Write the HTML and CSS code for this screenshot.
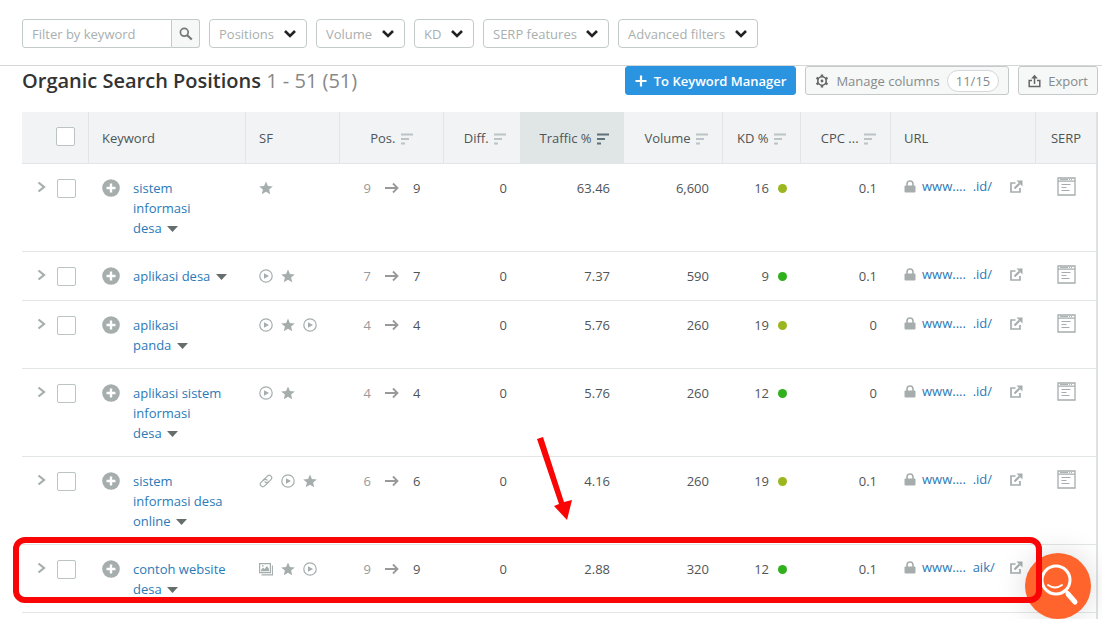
FILE: index.html
```html
<!DOCTYPE html>
<html lang="en">
<head>
  <meta charset="UTF-8">
  <meta name="viewport" content="width=device-width, initial-scale=1.0">
  <title>Organic Search Positions</title>
  <link rel="stylesheet" href="styles.css">
</head>
<body>
  <!-- icon sprite -->
  <svg class="sprite" aria-hidden="true">
    <symbol id="i-chevron" viewBox="0 0 14 10"><path d="M2 2l5 5 5-5" fill="none" stroke="currentColor" stroke-width="2.6"/></symbol>
    <symbol id="i-search" viewBox="0 0 14 14"><circle cx="5.3" cy="5.3" r="3.9" fill="none" stroke="currentColor" stroke-width="1.7"/><path d="M8.2 8.2l4.6 4.3" stroke="currentColor" stroke-width="2.2"/></symbol>
    <symbol id="i-plus" viewBox="0 0 12 12"><path d="M6 .5v11M.5 6h11" stroke="currentColor" stroke-width="2.2"/></symbol>
    <symbol id="i-gear" viewBox="0 0 14 14"><circle cx="7" cy="7" r="4.2" fill="none" stroke="currentColor" stroke-width="1.6"/><path d="M7 .6v2.400M7 11v2.400M1.500 3.800l2 1.200M10.500 9l2 1.200M1.500 10.200l2-1.200M10.500 5l2-1.200" stroke="currentColor" stroke-width="2.400"/><circle cx="7" cy="7" r="1.400" fill="currentColor"/></symbol>
    <symbol id="i-export" viewBox="0 0 13 14"><path d="M4 6.500H1.200v6h10.600v-6H9M6.500 10V2" fill="none" stroke="currentColor" stroke-width="1.500"/><path d="M3.200 4.600L6.500.8l3.300 3.800z" fill="currentColor"/></symbol>
    <symbol id="i-sort" viewBox="0 0 12 12"><path d="M0 1.500h12M0 6h8M0 10.500h4" stroke="currentColor" stroke-width="2"/></symbol>
    <symbol id="i-expand" viewBox="0 0 9 12"><path d="M1.500 1.500L7 6l-5.500 4.500" fill="none" stroke="currentColor" stroke-width="2.200"/></symbol>
    <symbol id="i-add" viewBox="0 0 18 18"><circle cx="9" cy="9" r="8.800" fill="currentColor"/><path d="M9 4.500v9M4.500 9h9" stroke="#fff" stroke-width="2.400"/></symbol>
    <symbol id="i-caret" viewBox="0 0 11 6"><path d="M0 0h11L5.500 6z" fill="currentColor"/></symbol>
    <symbol id="i-star" viewBox="0 0 14 14"><path d="M7 .5l1.900 4.500 4.900.4-3.700 3.200 1.100 4.700L7 10.800l-4.200 2.500 1.100-4.700L.2 5.400l4.900-.4z" fill="currentColor"/></symbol>
    <symbol id="i-play" viewBox="0 0 14 14"><circle cx="7" cy="7" r="6.200" fill="none" stroke="currentColor" stroke-width="1.200"/><path d="M5 4.200L10 7l-5 2.800z" fill="currentColor"/></symbol>
    <symbol id="i-link" viewBox="0 0 14 14"><g fill="none" stroke="currentColor" stroke-width="1.200" transform="rotate(-45 7 7)"><path d="M8.500 9.500H2.500a2.500 2.500 0 0 1 0-5h3.500a2.500 2.500 0 0 1 2.200 3.200"/><path d="M5.500 4.500h6a2.500 2.500 0 0 1 0 5H8a2.500 2.500 0 0 1-2.200-3.200"/></g></symbol>
    <symbol id="i-image" viewBox="0 0 14 14"><path d="M.6 1.600h10.800v9H.6zM2.500 12.800h11V3.500" fill="none" stroke="currentColor" stroke-width="1.200"/><path d="M2 9.300V8l2-2.500 1.500 1.500 2.500-3L10 7v2.300z" fill="currentColor"/><circle cx="3.800" cy="3.900" r=".8" fill="currentColor"/></symbol>
    <symbol id="i-arrow" viewBox="0 0 14 12"><path d="M0 6h12M8 1.500L12.500 6 8 10.500" fill="none" stroke="currentColor" stroke-width="1.800"/></symbol>
    <symbol id="i-lock" viewBox="0 0 12 13"><path d="M3 6V4a3 3 0 0 1 6 0v2" fill="none" stroke="currentColor" stroke-width="1.600"/><rect x=".5" y="5.500" width="11" height="7" rx="1" fill="currentColor"/></symbol>
    <symbol id="i-external" viewBox="0 0 13 13"><path d="M5.500 3H1v9h9V8" fill="none" stroke="currentColor" stroke-width="1.700"/><path d="M4.500 8.500l5-5" stroke="currentColor" stroke-width="2.200"/><path d="M6.500.5h6v6z" fill="currentColor"/></symbol>
    <symbol id="i-serp" viewBox="0 0 19 19"><path d="M1 1h17v17H1zM1 4.200h17" fill="none" stroke="currentColor" stroke-width="1.300"/><path d="M3 2.600h8M12 2.600h1M14 2.600h1" stroke="currentColor"/><path d="M4.500 7.500h9M4.500 10.500h5M4.500 13.500h8" stroke="currentColor" stroke-width="1.200"/></symbol>
  </svg>

  <form class="filters">
    <div class="search">
      <input type="text" placeholder="Filter by keyword" aria-label="Filter by keyword">
      <button type="button" aria-label="Search"><svg width="14" height="14"><use href="#i-search"/></svg></button>
    </div>
    <div class="filter">
      <select aria-label="Positions"><option>Positions</option></select>
      <svg width="14" height="10"><use href="#i-chevron"/></svg>
    </div>
    <div class="filter">
      <select aria-label="Volume"><option>Volume</option></select>
      <svg width="14" height="10"><use href="#i-chevron"/></svg>
    </div>
    <div class="filter">
      <select aria-label="KD"><option>KD</option></select>
      <svg width="14" height="10"><use href="#i-chevron"/></svg>
    </div>
    <div class="filter">
      <select aria-label="SERP features"><option>SERP features</option></select>
      <svg width="14" height="10"><use href="#i-chevron"/></svg>
    </div>
    <div class="filter">
      <select aria-label="Advanced filters"><option>Advanced filters</option></select>
      <svg width="14" height="10"><use href="#i-chevron"/></svg>
    </div>
  </form>

  <header class="heading">
    <h1>Organic Search Positions <span>1 - 51 (51)</span></h1>
    <div class="actions">
      <button class="btn primary" type="button"><svg width="12" height="12"><use href="#i-plus"/></svg>To Keyword Manager</button>
      <button class="btn" type="button"><svg width="14" height="14"><use href="#i-gear"/></svg>Manage columns <span class="count">11/15</span></button>
      <button class="btn" type="button"><svg width="13" height="14"><use href="#i-export"/></svg>Export</button>
    </div>
  </header>

  <main class="table-wrap">
    <table>
      <colgroup>
        <col class="c-check"><col class="c-keyword"><col class="c-sf"><col class="c-pos"><col class="c-diff"><col class="c-traffic"><col class="c-volume"><col class="c-kd"><col class="c-cpc"><col class="c-url"><col class="c-serp">
      </colgroup>
      <thead>
        <tr>
          <th class="check"><input type="checkbox" aria-label="Select all"></th>
          <th>Keyword</th>
          <th>SF</th>
          <th class="pos">Pos. <svg class="sort" width="12" height="12"><use href="#i-sort"/></svg></th>
          <th class="num">Diff. <svg class="sort" width="12" height="12"><use href="#i-sort"/></svg></th>
          <th class="num sorted">Traffic % <svg class="sort" width="12" height="12"><use href="#i-sort"/></svg></th>
          <th class="num">Volume <svg class="sort" width="12" height="12"><use href="#i-sort"/></svg></th>
          <th class="num">KD % <svg class="sort" width="12" height="12"><use href="#i-sort"/></svg></th>
          <th class="num">CPC ... <svg class="sort" width="12" height="12"><use href="#i-sort"/></svg></th>
          <th>URL</th>
          <th class="serp">SERP</th>
        </tr>
      </thead>
      <tbody>
        <tr>
          <td><div class="select"><svg width="9" height="12"><use href="#i-expand"/></svg><input type="checkbox" aria-label="Select sistem informasi desa"></div></td>
          <td><div class="keyword"><svg width="18" height="18"><use href="#i-add"/></svg><a href="#">sistem informasi <span>desa <svg width="11" height="6"><use href="#i-caret"/></svg></span></a></div></td>
          <td><div class="features"><svg><use href="#i-star"/></svg></div></td>
          <td><div class="move"><span>9</span><svg width="14" height="12"><use href="#i-arrow"/></svg>9</div></td>
          <td class="num">0</td>
          <td class="num">63.46</td>
          <td class="num">6,600</td>
          <td class="num"><div class="kd">16<i class="dot olive"></i></div></td>
          <td class="num">0.1</td>
          <td><div class="url"><svg width="12" height="13"><use href="#i-lock"/></svg><a href="#">www.... &nbsp;.id/</a><svg class="ext" width="13" height="13"><use href="#i-external"/></svg></div></td>
          <td class="serp"><svg width="19" height="19"><use href="#i-serp"/></svg></td>
        </tr>
        <tr>
          <td><div class="select"><svg width="9" height="12"><use href="#i-expand"/></svg><input type="checkbox" aria-label="Select aplikasi desa"></div></td>
          <td><div class="keyword"><svg width="18" height="18"><use href="#i-add"/></svg><a href="#">aplikasi <span>desa <svg width="11" height="6"><use href="#i-caret"/></svg></span></a></div></td>
          <td><div class="features"><svg><use href="#i-play"/></svg><svg><use href="#i-star"/></svg></div></td>
          <td><div class="move"><span>7</span><svg width="14" height="12"><use href="#i-arrow"/></svg>7</div></td>
          <td class="num">0</td>
          <td class="num">7.37</td>
          <td class="num">590</td>
          <td class="num"><div class="kd">9<i class="dot"></i></div></td>
          <td class="num">0.1</td>
          <td><div class="url"><svg width="12" height="13"><use href="#i-lock"/></svg><a href="#">www.... &nbsp;.id/</a><svg class="ext" width="13" height="13"><use href="#i-external"/></svg></div></td>
          <td class="serp"><svg width="19" height="19"><use href="#i-serp"/></svg></td>
        </tr>
        <tr>
          <td><div class="select"><svg width="9" height="12"><use href="#i-expand"/></svg><input type="checkbox" aria-label="Select aplikasi panda"></div></td>
          <td><div class="keyword"><svg width="18" height="18"><use href="#i-add"/></svg><a href="#">aplikasi <span>panda <svg width="11" height="6"><use href="#i-caret"/></svg></span></a></div></td>
          <td><div class="features"><svg><use href="#i-play"/></svg><svg><use href="#i-star"/></svg><svg><use href="#i-play"/></svg></div></td>
          <td><div class="move"><span>4</span><svg width="14" height="12"><use href="#i-arrow"/></svg>4</div></td>
          <td class="num">0</td>
          <td class="num">5.76</td>
          <td class="num">260</td>
          <td class="num"><div class="kd">19<i class="dot olive"></i></div></td>
          <td class="num">0</td>
          <td><div class="url"><svg width="12" height="13"><use href="#i-lock"/></svg><a href="#">www.... &nbsp;.id/</a><svg class="ext" width="13" height="13"><use href="#i-external"/></svg></div></td>
          <td class="serp"><svg width="19" height="19"><use href="#i-serp"/></svg></td>
        </tr>
        <tr>
          <td><div class="select"><svg width="9" height="12"><use href="#i-expand"/></svg><input type="checkbox" aria-label="Select aplikasi sistem informasi desa"></div></td>
          <td><div class="keyword"><svg width="18" height="18"><use href="#i-add"/></svg><a href="#">aplikasi sistem informasi <span>desa <svg width="11" height="6"><use href="#i-caret"/></svg></span></a></div></td>
          <td><div class="features"><svg><use href="#i-play"/></svg><svg><use href="#i-star"/></svg></div></td>
          <td><div class="move"><span>4</span><svg width="14" height="12"><use href="#i-arrow"/></svg>4</div></td>
          <td class="num">0</td>
          <td class="num">5.76</td>
          <td class="num">260</td>
          <td class="num"><div class="kd">12<i class="dot"></i></div></td>
          <td class="num">0</td>
          <td><div class="url"><svg width="12" height="13"><use href="#i-lock"/></svg><a href="#">www.... &nbsp;.id/</a><svg class="ext" width="13" height="13"><use href="#i-external"/></svg></div></td>
          <td class="serp"><svg width="19" height="19"><use href="#i-serp"/></svg></td>
        </tr>
        <tr>
          <td><div class="select"><svg width="9" height="12"><use href="#i-expand"/></svg><input type="checkbox" aria-label="Select sistem informasi desa online"></div></td>
          <td><div class="keyword"><svg width="18" height="18"><use href="#i-add"/></svg><a href="#">sistem informasi desa <span>online <svg width="11" height="6"><use href="#i-caret"/></svg></span></a></div></td>
          <td><div class="features"><svg><use href="#i-link"/></svg><svg><use href="#i-play"/></svg><svg><use href="#i-star"/></svg></div></td>
          <td><div class="move"><span>6</span><svg width="14" height="12"><use href="#i-arrow"/></svg>6</div></td>
          <td class="num">0</td>
          <td class="num">4.16</td>
          <td class="num">260</td>
          <td class="num"><div class="kd">19<i class="dot olive"></i></div></td>
          <td class="num">0.1</td>
          <td><div class="url"><svg width="12" height="13"><use href="#i-lock"/></svg><a href="#">www.... &nbsp;.id/</a><svg class="ext" width="13" height="13"><use href="#i-external"/></svg></div></td>
          <td class="serp"><svg width="19" height="19"><use href="#i-serp"/></svg></td>
        </tr>
        <tr>
          <td><div class="select"><svg width="9" height="12"><use href="#i-expand"/></svg><input type="checkbox" aria-label="Select contoh website desa"></div></td>
          <td><div class="keyword"><svg width="18" height="18"><use href="#i-add"/></svg><a href="#">contoh website <span>desa <svg width="11" height="6"><use href="#i-caret"/></svg></span></a></div></td>
          <td><div class="features"><svg><use href="#i-image"/></svg><svg><use href="#i-star"/></svg><svg><use href="#i-play"/></svg></div></td>
          <td><div class="move"><span>9</span><svg width="14" height="12"><use href="#i-arrow"/></svg>9</div></td>
          <td class="num">0</td>
          <td class="num">2.88</td>
          <td class="num">320</td>
          <td class="num"><div class="kd">12<i class="dot"></i></div></td>
          <td class="num">0.1</td>
          <td><div class="url"><svg width="12" height="13"><use href="#i-lock"/></svg><a href="#">www.... &nbsp;aik/</a><svg class="ext" width="13" height="13"><use href="#i-external"/></svg></div></td>
          <td></td>
        </tr>
      </tbody>
    </table>

    <!-- callout on the last row -->
    <div class="callout"></div>
    <svg class="pointer" width="36" height="86" viewBox="0 0 36 86"><path d="M0 3L6 1l21 65 8-2-5 20-13-14 5-2z" fill="#fa0505"/></svg>
  </main>

  <button class="help" type="button" aria-label="Search help">
    <svg width="66" height="66" viewBox="0 0 66 66" fill="none" stroke="#fff" stroke-linecap="round">
      <circle cx="31" cy="27" r="14" stroke-width="3"/>
      <path d="M23 32q7 5 14 0" stroke-width="2"/>
      <path d="M41 38l3 3" stroke-width="3"/>
      <path d="M43 41l7 8" stroke-width="5"/>
    </svg>
  </button>
</body>
</html>
```
FILE: styles.css
```css
:root {
  --text: #4f5557;
  --muted: #a5adad;
  --border: #c4caca;
  --line: #e3e6e7;
  --link: #2a7ab8;
  --red: #fa0505;
}

* {
  box-sizing: border-box;
}

body {
  margin: 0;
  font-family: "Open Sans", "Noto Sans", sans-serif;
  font-size: 13px;
  line-height: 20px;
  color: var(--text);
  background: #fff;
}

input, select, button {
  font: inherit;
}

svg {
  flex: none;
}

a {
  color: var(--link);
  text-decoration: none;
}

.sprite {
  display: none;
}

/* filters */
.filters {
  display: flex;
  gap: 9px;
  padding: 19px 22px 17px;
  border-bottom: 1px solid #d4d7d7;
}

.search {
  display: flex;
  width: 178px;
}

.search input {
  flex: 1;
  min-width: 0;
  height: 29px;
  padding: 0 9px;
  border: 1px solid var(--border);
  border-radius: 3px 0 0 3px;
  outline: none;
}

.search input::placeholder {
  color: #a9afaf;
}

.search button {
  display: grid;
  place-items: center;
  width: 28px;
  padding: 0;
  border: 1px solid var(--border);
  border-left: 0;
  border-radius: 0 3px 3px 0;
  background: #f6f7f7;
  color: #777;
}

.filter {
  position: relative;
}

.filter select {
  appearance: none;
  height: 29px;
  padding: 0 31px 0 9px;
  border: 1px solid var(--border);
  border-radius: 4px;
  background: #fff;
  color: #a9afaf;
}

.filter svg {
  position: absolute;
  top: 10px;
  right: 10px;
  color: #222;
  pointer-events: none;
}

/* heading */
.heading {
  display: flex;
  justify-content: space-between;
  align-items: flex-start;
  height: 30px;
  padding: 0 4px 0 22px;
}

h1 {
  margin: 0;
  font-size: 20px;
  font-weight: 600;
  line-height: 30px;
  color: #333;
}

h1 span {
  font-weight: 400;
  color: #888;
}

.actions {
  display: flex;
  gap: 9px;
}

.btn {
  display: flex;
  align-items: center;
  gap: 7px;
  height: 29px;
  padding: 0 9px;
  border: 1px solid var(--border);
  border-radius: 3px;
  background: #f6f7f7;
  color: #858b8b;
  white-space: nowrap;
}

.btn svg {
  color: #666;
}

.btn.primary {
  border-color: #2b94e1;
  background: #2b94e1;
  color: #fff;
  font-weight: 600;
}

.btn.primary svg {
  color: #fff;
}

.count {
  height: 22px;
  padding: 0 8px;
  border: 1px solid #d4d8d8;
  border-radius: 11px;
  background: #fff;
}

/* table */
.table-wrap {
  position: relative;
  margin: 16px 4px 0 22px;
  padding-bottom: 6px;
  border-right: 2px solid #dfe2e3;
}

table {
  width: 100%;
  table-layout: fixed;
  border-collapse: separate;
  border-spacing: 0;
}

.c-check { width: 67px; }
.c-keyword { width: 157px; }
.c-sf { width: 94px; }
.c-pos { width: 104px; }
.c-diff { width: 77px; }
.c-traffic { width: 103px; }
.c-volume { width: 99px; }
.c-kd { width: 78px; }
.c-cpc { width: 90px; }
.c-serp { width: 60px; }

th {
  height: 52px;
  padding: 0 13px;
  border-right: 1px solid #e2e5e6;
  border-bottom: 1px solid var(--line);
  background: #f1f3f4;
  font-weight: 400;
  text-align: left;
  white-space: nowrap;
}

th:last-child {
  border-right: 0;
}

th.sorted {
  background: #e0e5e6;
}

.sort {
  margin-left: 2px;
  color: #bcc4c5;
  vertical-align: -2px;
}

.sorted .sort {
  color: #5f7179;
}

td {
  height: 49px;
  padding: 14px 13px 13px;
  border-bottom: 1px solid var(--line);
  vertical-align: top;
}

th.pos {
  text-align: center;
}

.num {
  padding-right: 14px;
  text-align: right;
}

th.check {
  padding: 0 13px 4px;
  text-align: right;
}

.serp {
  padding-left: 0;
  padding-right: 0;
  text-align: center;
}

td.serp {
  padding-top: 13px;
  color: var(--muted);
}

td.serp svg {
  display: block;
  margin: 0 auto;
}

input[type="checkbox"] {
  appearance: none;
  width: 19px;
  height: 19px;
  margin: 0;
  border: 1px solid #bcc3c3;
  border-radius: 2px;
  background: #fff;
  vertical-align: middle;
}

.select {
  display: flex;
  justify-content: flex-end;
  gap: 11px;
  height: 20px;
  align-items: center;
  color: var(--muted);
}

.select svg {
  margin-bottom: 3px;
}

.keyword {
  display: flex;
  gap: 13px;
  padding-right: 4px;
}

.keyword > svg {
  margin-top: 1px;
  color: var(--muted);
}

.keyword span {
  white-space: nowrap;
}

.keyword a svg {
  margin-left: 2px;
  color: #666d6d;
  vertical-align: 1px;
}

.features {
  display: flex;
  align-items: center;
  gap: 8px;
  height: 20px;
  color: var(--muted);
}

.features svg {
  width: 14px;
  height: 14px;
}

.move {
  display: flex;
  justify-content: center;
  align-items: center;
  gap: 14px;
}

.move span,
.move svg {
  color: #999;
}

.kd {
  display: flex;
  justify-content: flex-end;
  align-items: center;
  gap: 9px;
}

.dot {
  width: 9px;
  height: 9px;
  border-radius: 50%;
  background: #2fb01c;
}

.dot.olive {
  background: #9ab71f;
}

.url {
  display: flex;
  align-items: center;
  gap: 6px;
  margin-top: -2px;
  white-space: nowrap;
  color: var(--muted);
}

.ext {
  margin-left: auto;
}

/* callout */
.callout {
  position: absolute;
  left: -9px;
  right: 54px;
  bottom: 16px;
  z-index: 2;
  height: 66px;
  border: 6px solid var(--red);
  border-radius: 12px;
  pointer-events: none;
}

.pointer {
  position: absolute;
  left: 515px;
  bottom: 97px;
}

.help {
  position: fixed;
  right: 11px;
  bottom: 0;
  z-index: 1;
  width: 66px;
  height: 66px;
  padding: 0;
  border: 0;
  border-radius: 50%;
  background: #ff642d;
  box-shadow: 0 0 30px rgba(0, 0, 0, 0.15);
}
```
